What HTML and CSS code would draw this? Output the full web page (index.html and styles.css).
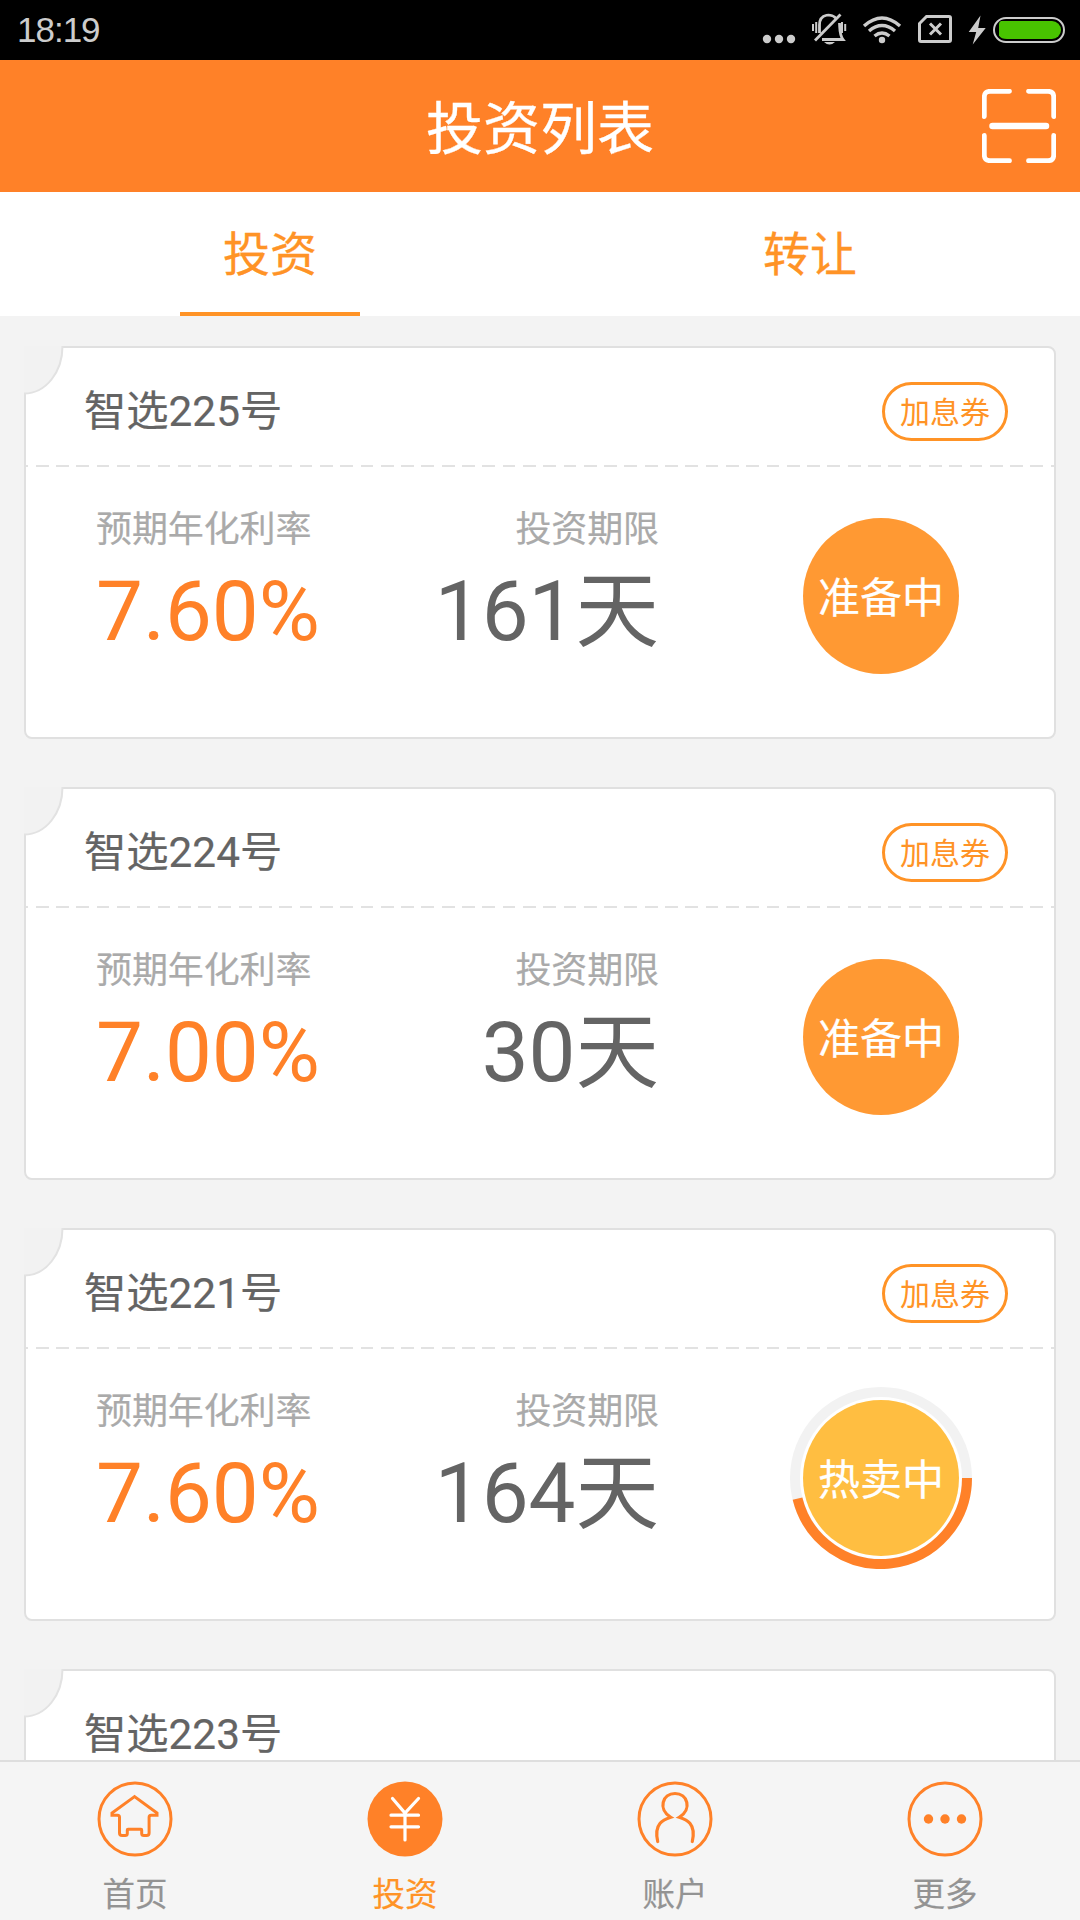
FILE: index.html
```html
<!DOCTYPE html>
<html lang="zh-CN">
<head>
<meta charset="utf-8">
<title>投资列表</title>
<link rel="stylesheet" href="styles.css">
</head>
<body>
<div class="status-bar">
  <span class="clock">18:19</span>
  <svg class="status-icons" width="306" height="60" viewBox="760 0 306 60">
    <g fill="#ccc">
      <circle cx="767" cy="39" r="4.200"/><circle cx="779" cy="39" r="4.200"/><circle cx="791" cy="39" r="4.200"/>
      <path d="M824 42h11q-5.500 5-11 0z"/>
      <circle cx="882" cy="40" r="3.200"/>
      <path d="M980.500 15.500 968.700 32h7.500l-3.500 12.500L985.700 28h-7.500z"/>
    </g>
    <g fill="none" stroke="#ccc">
      <path d="M813 24v7M816.200 22v11M842 22v11M845.200 24v7" stroke-width="2"/>
      <path d="M819.500 33v-8c0-12 13-12 17-6M839.500 23c.500 8 0 12 3.500 16.500h-21" stroke-width="2.800"/>
      <path d="M815 40.500 840.500 14.500" stroke-width="2.800"/>
      <path d="M864 26q18-16 36 0M869 31q13-11 26 0M874.500 36q7.500-6 15 0" stroke-width="3.400"/>
      <path d="M926.500 16.500h22.500q1.500 0 1.500 1.500v22q0 1.500-1.500 1.500h-28q-1.500 0-1.500-1.500V23.500z" stroke-width="3"/>
      <path d="M930 23.500 941 34.500M941 23.500 930 34.500" stroke-width="3"/>
      <rect x="994" y="18" width="70" height="24" rx="12" stroke-width="2"/>
    </g>
    <path d="M1001 21h51a9 9 0 0 1 0 18h-45q-6 0-8-3.500V24q0-2 2-3z" fill="#48c400"/>
  </svg>
</div>
<header class="app-bar">
  <h1 class="app-title">投资列表</h1>
  <svg class="scan" width="74" height="74" viewBox="0 0 74 74" fill="none" stroke="#fff" stroke-linecap="round">
    <path d="M2.300 27.500V8q0-5.700 5.700-5.700h19.500M46.500 2.300H66q5.700 0 5.700 5.700v19.500M71.700 46.500V66q0 5.700-5.700 5.700H46.500M27.500 71.700H8q-5.700 0-5.700-5.700V46.500" stroke-width="4.800"/>
    <path d="M10.500 37h53.500" stroke-width="6.500"/>
  </svg>
</header>
<nav class="tabs">
  <div class="tab tab-active"><span>投资</span></div>
  <div class="tab"><span>转让</span></div>
</nav>
<main class="list">
  <article class="card">
    <svg class="notch" width="40" height="49" viewBox="0 0 40 49"><path class="notch-fill" d="M0 0h38.500C38.500 26 22 47.500 0 47.500z"/><path class="notch-edge" d="M38.500 0C38.500 26 22 47.500 0 47.500"/></svg>
    <div class="card-head"><h2 class="name">智选225号</h2><span class="coupon">加息券</span></div>
    <div class="card-body">
      <div class="rate"><p class="label">预期年化利率</p><p class="value value-rate">7.60%</p></div>
      <div class="term"><p class="label">投资期限</p><p class="value">161天</p></div>
      <div class="state"><span class="disc">准备中</span></div>
    </div>
  </article>
  <article class="card">
    <svg class="notch" width="40" height="49" viewBox="0 0 40 49"><path class="notch-fill" d="M0 0h38.500C38.500 26 22 47.500 0 47.500z"/><path class="notch-edge" d="M38.500 0C38.500 26 22 47.500 0 47.500"/></svg>
    <div class="card-head"><h2 class="name">智选224号</h2><span class="coupon">加息券</span></div>
    <div class="card-body">
      <div class="rate"><p class="label">预期年化利率</p><p class="value value-rate">7.00%</p></div>
      <div class="term"><p class="label">投资期限</p><p class="value">30天</p></div>
      <div class="state"><span class="disc">准备中</span></div>
    </div>
  </article>
  <article class="card">
    <svg class="notch" width="40" height="49" viewBox="0 0 40 49"><path class="notch-fill" d="M0 0h38.500C38.500 26 22 47.500 0 47.500z"/><path class="notch-edge" d="M38.500 0C38.500 26 22 47.500 0 47.500"/></svg>
    <div class="card-head"><h2 class="name">智选221号</h2><span class="coupon">加息券</span></div>
    <div class="card-body">
      <div class="rate"><p class="label">预期年化利率</p><p class="value value-rate">7.60%</p></div>
      <div class="term"><p class="label">投资期限</p><p class="value">164天</p></div>
      <div class="state">
        <svg class="ring" width="182" height="182" viewBox="-91 -91 182 182" fill="none" stroke-width="10">
          <circle r="86" stroke="#f2f2f2"/>
          <path d="M86 0A86 86 0 0 1 -83.500 20.600" stroke="#ff8128"/>
        </svg>
        <span class="disc disc-hot">热卖中</span>
      </div>
    </div>
  </article>
  <article class="card">
    <svg class="notch" width="40" height="49" viewBox="0 0 40 49"><path class="notch-fill" d="M0 0h38.500C38.500 26 22 47.500 0 47.500z"/><path class="notch-edge" d="M38.500 0C38.500 26 22 47.500 0 47.500"/></svg>
    <div class="card-head"><h2 class="name">智选223号</h2></div>
  </article>
</main>
<footer class="bottom-nav">
  <div class="nav-item">
    <svg width="76" height="76" viewBox="0 0 76 76" fill="none" stroke="#ff8128" stroke-width="3">
      <circle cx="38" cy="38" r="36"/>
      <path d="M37.500 15.600 15 32v2.200h5.500q2 0 2 2V52q0 2.600 2.600 2.600h3q2.200 0 2.200-2V49q0-.700.700-.700h13q.700 0 .700.700v3.600q0 2 2.200 2h2.600q2.600 0 2.600-2.600V36.200q0-2 2-2H60V32z"/>
    </svg>
    <span>首页</span>
  </div>
  <div class="nav-item nav-active">
    <svg width="76" height="76" viewBox="0 0 76 76" fill="none" stroke="#fff" stroke-width="3.200" stroke-linecap="round">
      <circle cx="38" cy="38" r="37.500" fill="#ff8128" stroke="none"/>
      <path d="M25.500 17.500 38 32 51.500 17.500M38 32v27M24 34.200h27.500M24 45.800h27.500"/>
    </svg>
    <span>投资</span>
  </div>
  <div class="nav-item">
    <svg width="76" height="76" viewBox="0 0 76 76" fill="none" stroke="#ff8128" stroke-width="3.200" stroke-linecap="round">
      <circle cx="38" cy="38" r="36" stroke-width="3"/>
      <path d="M20.700 60.500C16.500 42 27 38.500 33.700 36.300 20.500 28 25.500 12.500 38 12.500S55.500 28 42.300 36.300C49 38.500 59.500 42 55.300 60.500"/>
    </svg>
    <span>账户</span>
  </div>
  <div class="nav-item">
    <svg width="76" height="76" viewBox="0 0 76 76" fill="#ff8128">
      <circle cx="38" cy="38" r="36" fill="none" stroke="#ff8128" stroke-width="3"/>
      <circle cx="21.500" cy="38" r="4.700"/><circle cx="38" cy="38" r="4.700"/><circle cx="54.500" cy="38" r="4.700"/>
    </svg>
    <span>更多</span>
  </div>
</footer>
</body>
</html>
```
FILE: styles.css
```css
* { box-sizing: border-box; margin: 0; padding: 0; }
body {
  width: 1080px;
  height: 1920px;
  overflow: hidden;
  display: flex;
  flex-direction: column;
  background: #f3f3f3;
  color: #646464;
  font-family: Roboto, "Noto Sans CJK SC", sans-serif;
}
h1, h2 { font-weight: 400; }
svg { display: block; flex: none; }

.status-bar {
  height: 60px;
  flex: none;
  display: flex;
  align-items: center;
  justify-content: space-between;
  padding: 0 14px 0 17px;
  background: #000;
}
.clock {
  color: #ccc;
  font: 35px/62px "Liberation Sans", Arial, sans-serif;
  letter-spacing: -1px;
}

.app-bar {
  height: 132px;
  flex: none;
  display: grid;
  grid-template-columns: 74px 1fr 74px;
  align-items: center;
  padding: 0 24px;
  background: #ff8128;
}
.app-title {
  grid-column: 2;
  color: #fff;
  font-size: 57px;
  line-height: 80px;
  text-align: center;
  padding-top: 8px;
  -webkit-text-stroke: 0.3px;
}

.tabs { height: 124px; flex: none; display: flex; background: #fff; }
.tab {
  flex: 1;
  display: flex;
  justify-content: center;
  color: #ff9326;
  font-size: 47px;
  line-height: 126px;
  -webkit-text-stroke: 0.3px;
}
.tab span { width: 180px; height: 124px; text-align: center; }
.tab-active span { border-bottom: 4px solid #ff9326; }

.list {
  flex: 1;
  min-height: 0;
  overflow: hidden;
  display: flex;
  flex-direction: column;
  gap: 48px;
  padding: 30px 24px 0;
}
.card {
  position: relative;
  flex: none;
  height: 393px;
  background: #fff;
  border: 2px solid #e0e0e0;
  border-radius: 8px;
}
.notch { position: absolute; left: -2px; top: -2px; }
.notch-fill { fill: #f2f2f2; }
.notch-edge { fill: none; stroke: #e2e2e2; stroke-width: 2; }
.card-head {
  height: 119px;
  display: flex;
  align-items: center;
  justify-content: space-between;
  padding: 10px 46px 2px 58px;
  background: repeating-linear-gradient(90deg, #e2e2e2 0 12.800px, transparent 12.800px 20.300px) -10.600px 100% / 1060px 2px no-repeat;
}
.name { font-size: 42.3px; line-height: 60px; padding-top: 1px; -webkit-text-stroke: 0.2px; }
.coupon {
  width: 126px;
  height: 59px;
  border: 3px solid #ff9326;
  border-radius: 30px;
  color: #ff9326;
  font-size: 30px;
  line-height: 55px;
  text-align: center;
}
.card-body { display: flex; padding: 38px 0 0 70px; }
.rate { width: 240px; }
.term { width: 322px; margin-left: 1px; text-align: right; }
.label { color: #aaa; font-size: 36px; line-height: 50px; letter-spacing: -0.1px; -webkit-text-stroke: 0.2px; }
.value { margin-top: 15px; font-size: 83.5px; line-height: 84px; white-space: nowrap; }
.value-rate { color: #ff8128; }
.state {
  width: 182px;
  height: 182px;
  margin-left: 131px;
  display: grid;
  place-items: center;
}
.ring, .disc { grid-area: 1 / 1; }
.disc {
  width: 156px;
  height: 156px;
  border-radius: 50%;
  background: #ff9933;
  color: #fff;
  font-size: 42px;
  line-height: 162px;
  text-align: center;
  -webkit-text-stroke: 0.2px;
}
.disc-hot { background: #ffbe41; }

.bottom-nav {
  height: 160px;
  flex: none;
  display: flex;
  border-top: 2px solid #dedede;
  background: #f5f5f5;
}
.nav-item {
  flex: 1;
  display: flex;
  flex-direction: column;
  align-items: center;
  padding-top: 19px;
  color: #939393;
  font-size: 32.5px;
  line-height: 40px;
  -webkit-text-stroke: 0.2px;
}
.nav-item span { margin-top: 18px; }
.nav-active { color: #ff9326; }
```
